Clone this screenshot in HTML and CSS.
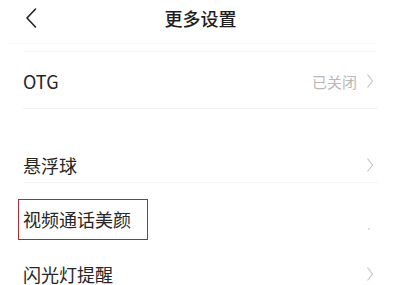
FILE: index.html
```html
<!DOCTYPE html>
<html lang="zh">
<head>
<meta charset="utf-8">
<link rel="stylesheet" href="styles.css">
</head>
<body>
<div class="page">
  <header class="nav">
    <svg class="back" width="14" height="22" viewBox="0 0 14 22"><path d="M11.5 2 L3 11 L11.5 20" fill="none" stroke="#222" stroke-width="1.6" stroke-linecap="round" stroke-linejoin="round"/></svg>
    <div class="title">更多设置</div>
  </header>
  <div class="fade-lines">
    <div class="fl fl1"></div>
    <div class="fl fl2"></div>
  </div>
  <div class="row row-otg">
    <span class="label">OTG</span>
    <span class="right"><span class="value">已关闭</span><svg class="chev" width="8" height="16" viewBox="0 0 8 16"><path d="M1.5 1.5 L6.5 8 L1.5 14.5" fill="none" stroke="#c4c4c4" stroke-width="1.2" stroke-linejoin="round"/></svg></span>
  </div>
  <div class="row row-float">
    <span class="label">悬浮球</span>
    <span class="right"><svg class="chev" width="8" height="16" viewBox="0 0 8 16"><path d="M1.5 1.5 L6.5 8 L1.5 14.5" fill="none" stroke="#c4c4c4" stroke-width="1.2" stroke-linejoin="round"/></svg></span>
  </div>
  <div class="row row-video">
    <span class="label boxed">视频通话美颜</span>
    <span class="right"><span class="dot"></span></span>
  </div>
  <div class="row row-flash">
    <span class="label">闪光灯提醒</span>
    <span class="right"><svg class="chev" width="8" height="16" viewBox="0 0 8 16"><path d="M1.5 1.5 L6.5 8 L1.5 14.5" fill="none" stroke="#c4c4c4" stroke-width="1.2" stroke-linejoin="round"/></svg></span>
  </div>
</div>
</body>
</html>
```
FILE: styles.css
```css
* { box-sizing: border-box; }
html, body { margin: 0; padding: 0; background: #fff; }
body {
  font-family: "Noto Sans CJK SC", "Noto Sans", sans-serif;
  color: #262626;
  width: 401px;
  height: 285px;
  overflow: hidden;
}
.page { width: 401px; }
.nav {
  height: 36px;
  display: flex;
  align-items: center;
  justify-content: center;
  position: relative;
}
.back { position: absolute; left: 24px; top: 7px; }
.title {
  font-size: 18px;
  font-weight: 500;
  line-height: 24px;
  margin-top: -1px;
  color: #1e1e1e;
}
.fade-lines { height: 18px; padding-top: 7px; }
.fl { height: 1px; margin: 0 24px 0 8px; background: #f7f7f7; }
.fl2 { margin-top: 7px; margin-left: 24px; background: #f5f5f5; }
.row {
  display: flex;
  align-items: center;
  justify-content: space-between;
  margin: 0 23px;
  padding-right: 4px;
  font-size: 18px;
}
.row-otg { height: 55px; border-bottom: 1px solid #f3f3f3; }
.row-float { height: 46px; margin-top: 28px; border-bottom: 1px solid #f5f5f5; padding-top: 11px; }
.row-video { height: 56px; padding-top: 16px; }
.row-flash { height: 54px; padding-top: 16px; }
.label { line-height: 24px; }
.boxed {
  outline: 1px solid #b5262e;
  outline-offset: 0;
  padding: 8px 16px 8px 4px;
  margin-left: -4px;
  line-height: 23px;
}
.right { display: flex; align-items: center; }
.value { font-size: 15px; color: #b8b8b8; margin-right: 9px; }
.chev { display: block; }
.dot { width: 2px; height: 2px; background: #ddd; margin-right: 4px; margin-top: 20px; }
```
